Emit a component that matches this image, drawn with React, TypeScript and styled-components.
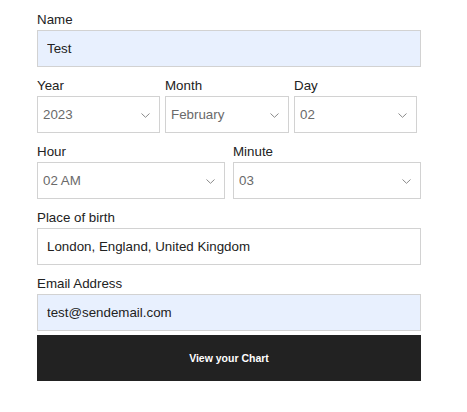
import React, { FC } from "react";
import styled, { createGlobalStyle } from "styled-components";

const GlobalStyle = createGlobalStyle`
  html, body {
    margin: 0;
    padding: 0;
    background: #fff;
  }
  body {
    font-family: "Liberation Sans", Arial, sans-serif;
  }
`;

const Form = styled.form`
  width: 384px;
  padding: 12px 0 0 37px;
  display: flex;
  flex-direction: column;
`;

const Field = styled.div<{ $last?: boolean }>`
  display: flex;
  flex-direction: column;
  margin-bottom: ${(p) => (p.$last ? "4px" : "11px")};
  min-width: 0;
`;

const Label = styled.label`
  font-size: 13.333px;
  line-height: 16px;
  color: #222;
  margin-bottom: 2px;
`;

const TextInput = styled.input<{ $filled?: boolean }>`
  box-sizing: border-box;
  width: 100%;
  height: 37px;
  margin: 0;
  padding: 0 9px;
  border: 1px solid #d2d2d2;
  border-radius: 0;
  outline: none;
  background: ${(p) => (p.$filled ? "#e8f0fe" : "#fff")};
  font-family: "Liberation Sans", Arial, sans-serif;
  font-size: 13.333px;
  color: #222;
`;

const DateRow = styled.div`
  display: grid;
  grid-template-columns: 123px 124px 123px;
  column-gap: 5px;
`;

const TimeRow = styled.div`
  display: grid;
  grid-template-columns: 1fr 1fr;
  column-gap: 8px;
`;

const SelectWrap = styled.div`
  position: relative;
  height: 37px;
`;

const Select = styled.select`
  box-sizing: border-box;
  width: 100%;
  height: 37px;
  margin: 0;
  padding: 0 24px 0 5px;
  border: 1px solid #d2d2d2;
  border-radius: 0;
  outline: none;
  appearance: none;
  -webkit-appearance: none;
  background: #fff;
  font-family: "Liberation Sans", Arial, sans-serif;
  font-size: 13.333px;
  color: #6a6a6a;
`;

const Chevron = styled.svg`
  position: absolute;
  right: 10px;
  top: 17px;
  width: 9px;
  height: 5px;
  pointer-events: none;
`;

const SubmitButton = styled.button`
  box-sizing: border-box;
  width: 100%;
  height: 46px;
  margin: 0;
  border: none;
  border-radius: 0;
  background: #222;
  color: #fff;
  font-family: "Liberation Sans", Arial, sans-serif;
  font-size: 10.5px;
  font-weight: bold;
  cursor: pointer;
`;

const Dropdown: FC<{ value: string; options: string[] }> = ({ value, options }) => (
  <SelectWrap>
    <Select defaultValue={value}>
      {options.map((o) => (
        <option key={o} value={o}>
          {o}
        </option>
      ))}
    </Select>
    <Chevron viewBox="0 0 9 5">
      <path d="M0.5 0.5 L4.5 4.3 L8.5 0.5" fill="none" stroke="#8a8a8a" strokeWidth="1" />
    </Chevron>
  </SelectWrap>
);

const months = [
  "January", "February", "March", "April", "May", "June",
  "July", "August", "September", "October", "November", "December",
];
const days = Array.from({ length: 31 }, (_, i) => String(i + 1).padStart(2, "0"));
const hours = Array.from({ length: 24 }, (_, i) => {
  const h = i % 12 === 0 ? 12 : i % 12;
  return `${String(h).padStart(2, "0")} ${i < 12 ? "AM" : "PM"}`;
});
const minutes = Array.from({ length: 60 }, (_, i) => String(i).padStart(2, "0"));
const years = Array.from({ length: 100 }, (_, i) => String(2024 - i));

const App: FC = () => {
  return (
    <>
      <GlobalStyle />
      <Form onSubmit={(e) => e.preventDefault()}>
        <Field>
          <Label>Name</Label>
          <TextInput $filled defaultValue="Test" />
        </Field>
        <DateRow>
          <Field>
            <Label>Year</Label>
            <Dropdown value="2023" options={years} />
          </Field>
          <Field>
            <Label>Month</Label>
            <Dropdown value="February" options={months} />
          </Field>
          <Field>
            <Label>Day</Label>
            <Dropdown value="02" options={days} />
          </Field>
        </DateRow>
        <TimeRow>
          <Field>
            <Label>Hour</Label>
            <Dropdown value="02 AM" options={hours} />
          </Field>
          <Field>
            <Label>Minute</Label>
            <Dropdown value="03" options={minutes} />
          </Field>
        </TimeRow>
        <Field>
          <Label>Place of birth</Label>
          <TextInput defaultValue="London, England, United Kingdom" />
        </Field>
        <Field $last>
          <Label>Email Address</Label>
          <TextInput $filled defaultValue="test@sendemail.com" />
        </Field>
        <SubmitButton type="submit">View your Chart</SubmitButton>
      </Form>
    </>
  );
};

export default App;
